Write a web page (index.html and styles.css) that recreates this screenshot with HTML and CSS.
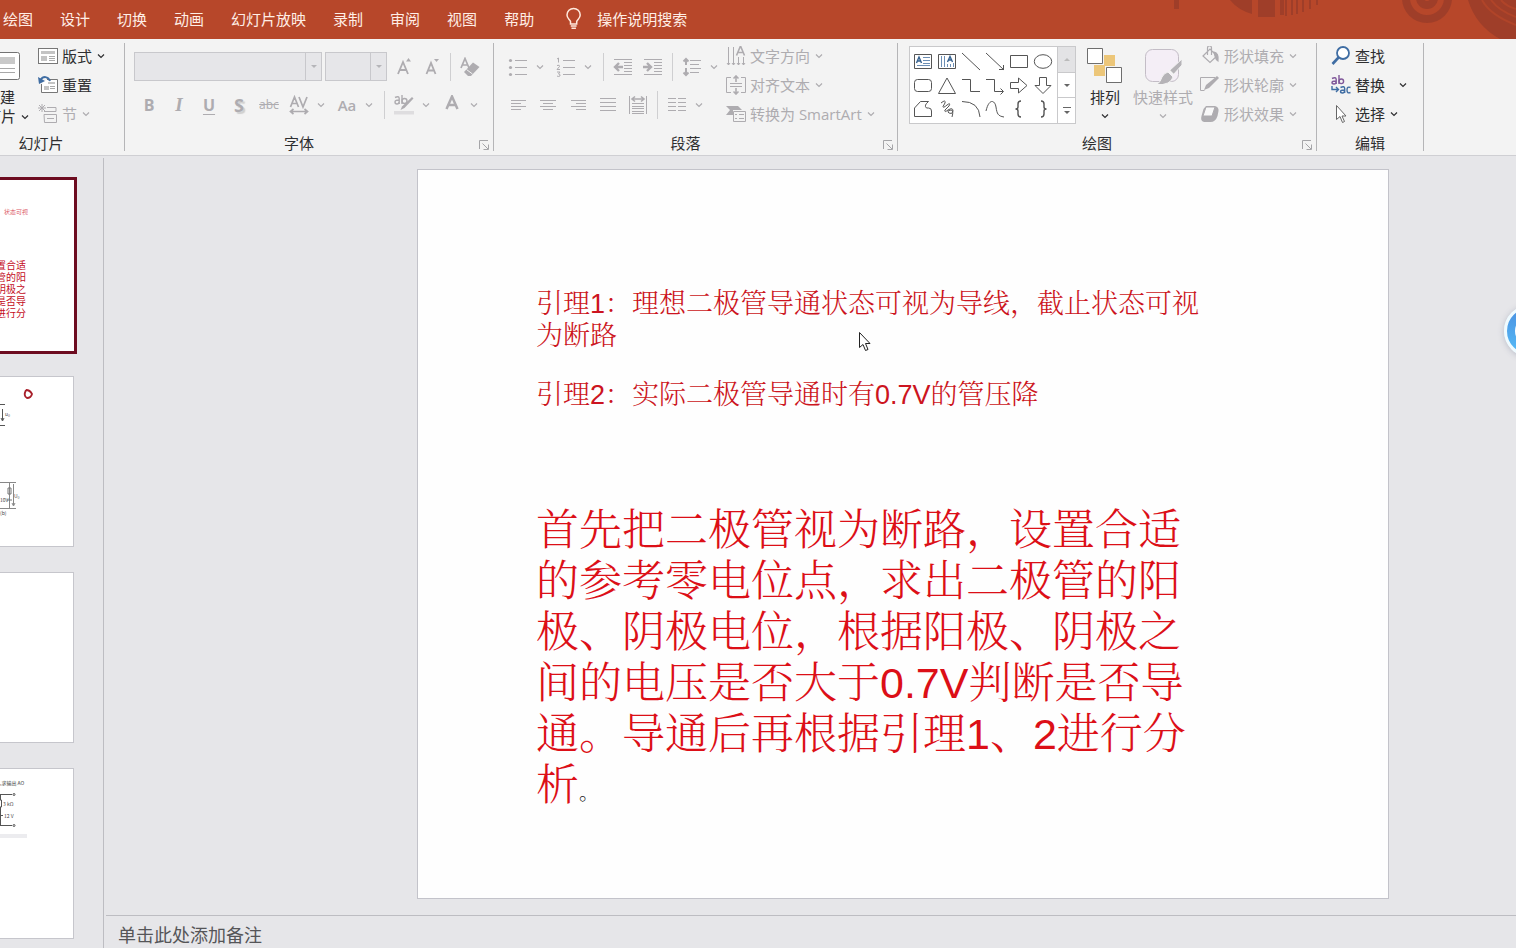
FILE: index.html
```html
<!DOCTYPE html>
<html lang="zh-CN">
<head>
<meta charset="utf-8">
<title>演示文稿</title>
<link rel="stylesheet" href="styles.css">
</head>
<body>
<svg class="sprite" aria-hidden="true">
  <symbol id="chev" viewBox="0 0 8 8"><path d="M1 2.500 4 5.500 7 2.500" fill="none" stroke="currentColor" stroke-width="1.200"/></symbol>
  <symbol id="launch" viewBox="0 0 12 12"><path d="M1.500 10V1.500H10M4.500 4.500 10 10M10.500 5.500V10.500H5.500" fill="none" stroke="currentColor"/></symbol>
</svg>
<div class="app">
<nav class="tabs">
  <svg class="tabs-art" viewBox="0 0 446 39" aria-hidden="true">
    <g fill="#9f3e29"><path d="M104 0h5v9h-5zM160 0h22v14q-14-4-22-14zM188 0h17v17h-17zM210 0h4v15h-4zM215 0h2v16h-2zM221 0h2v15h-2zM226 0h2v14h-2zM232 0h2v12h-2zM239 0h2v9h-2zM246 0h2v5h-2z"/>
    <path d="M398 0q8 26 32 39h16V0z"/></g>
    <g fill="none" stroke="#9f3e29"><circle cx="357" cy="-2" r="21" stroke-width="8"/><circle cx="357" cy="-2" r="7" stroke-width="8"/></g>
    <path d="M412 0q8 15 34 25M421 0q8 11 25 17M431 0q5 6 15 9" fill="none" stroke="#b04429" stroke-width="2"/>
  </svg>
  <button type="button">绘图</button><button type="button">设计</button><button type="button">切换</button><button type="button">动画</button><button type="button">幻灯片放映</button><button type="button">录制</button><button type="button">审阅</button><button type="button">视图</button><button type="button">帮助</button>
  <button type="button" class="tell"><svg width="24" height="24" viewBox="0 0 24 24" fill="none" stroke="#ffe9dc" stroke-width="1.500"><path d="M9.500 17v-2.500C9 12.500 6 11.500 6 8a6.600 6.600 0 0 1 13.200 0c0 3.500-3 4.500-3.500 6.500V17zM9.800 19h5.800M10.500 21.200h4.400"/></svg>操作说明搜索</button>
</nav>

<div class="ribbon">
  <section class="group group-slides">
    <div class="body">
      <button type="button" class="big new"><svg width="40" height="36" viewBox="0 0 40 36"><rect x=".5" y="4.500" width="39" height="27" rx="2" fill="#fff" stroke="#737373"/><path d="M5 9h30v7H5z" fill="#c9c9c9"/><path d="M5 20.500h30M5 24.500h30" stroke="#a8a8a8"/></svg><span>新建</span><span>幻灯片<svg class="chev"><use href="#chev"/></svg></span></button>
      <div class="rows">
        <button type="button" class="cmd"><svg class="ic" viewBox="0 0 20 20"><rect x=".5" y="2.500" width="19" height="15" fill="#fff" stroke="#777"/><path d="M3 5h14v3H3zM3 10h6v5H3z" fill="#c4c4c4"/><path d="M11 10.500h6M11 12.500h6M11 14.500h6" stroke="#aaa"/></svg>版式<svg class="chev"><use href="#chev"/></svg></button>
        <button type="button" class="cmd"><svg class="ic" viewBox="0 0 20 20"><path d="M9 4.500h10.500v13H3.500V9" fill="#fff" stroke="#777"/><path d="M10 7h7v2h-7zM6 11h5v4H6z" fill="#c4c4c4"/><path d="M12 11.500h5M12 13.500h5" stroke="#aaa"/><path d="M12 6C10 1 5 1 2.500 5" fill="none" stroke="#3f6da3" stroke-width="2"/><path d="M0 2l1 7 6-3z" fill="#3f6da3"/></svg>重置</button>
        <button type="button" class="cmd" disabled><svg class="ic" viewBox="0 0 20 20" fill="none" stroke="currentColor"><path d="M1 1l6 6M7 1 1 7M4 0v8M0 4h8M9 3.500h9v4H6M6 10.500h12.500v8h-12zM9 14.500h7"/></svg>节<svg class="chev"><use href="#chev"/></svg></button>
      </div>
    </div>
    <div class="foot"><h2>幻灯片</h2></div>
  </section>

  <section class="group group-font">
    <div class="body"><div class="lines">
      <div class="line tall">
        <span class="combo name"><select aria-label="字体" disabled></select><i></i></span><span class="combo size"><select aria-label="字号" disabled></select><i></i></span>
        <button type="button" class="tool narrow" disabled aria-label="增大字号"><svg class="ic" viewBox="0 0 20 20"><path d="M4 17 9 5l5 12M5.800 13h6.400" fill="none" stroke="currentColor" stroke-width="1.800"/><path d="M12 4.500 14.500 1 17 4.500z" fill="currentColor"/></svg></button>
        <button type="button" class="tool narrow" disabled aria-label="减小字号"><svg class="ic" viewBox="0 0 20 20"><path d="M4.500 17 9 6l4.500 11M6 13.500h6" fill="none" stroke="currentColor" stroke-width="1.800"/><path d="M12 2h5l-2.500 3z" fill="currentColor"/></svg></button>
        <span class="sep"></span>
        <button type="button" class="tool" disabled aria-label="清除格式"><svg class="ic" viewBox="0 0 20 20"><path d="M1 11 5 1.500 9 11M2.500 8h5" fill="none" stroke="currentColor" stroke-width="1.700"/><path d="M13 5.500 19.500 10 11 19H8L4 15z" fill="currentColor"/><path d="M6.500 12.500l6 4.500" stroke="#f3f3f3"/></svg></button>
      </div>
      <div class="line">
        <button type="button" class="tool b" disabled>B</button><button type="button" class="tool i" disabled>I</button><button type="button" class="tool u" disabled>U</button><button type="button" class="tool s" disabled>S</button><button type="button" class="tool abc" disabled>abc</button>
        <button type="button" class="split" disabled aria-label="字符间距"><svg class="ic" viewBox="0 0 20 20" fill="none" stroke="currentColor" stroke-width="1.700"><path d="M1.500 12 5.500 2l4 10M3 8.500h5M10 2l4 10 4-10M1.500 16.500h17M4.500 14l-3 2.500 3 2.500M15.500 14l3 2.500-3 2.500"/></svg><svg class="chev"><use href="#chev"/></svg></button>
        <button type="button" class="split" disabled><span class="face">Aa</span><svg class="chev"><use href="#chev"/></svg></button>
        <span class="sep"></span>
        <button type="button" class="split" disabled aria-label="突出显示"><svg class="ic" viewBox="0 0 20 20"><g fill="none" stroke="currentColor" stroke-width="1.400"><path d="M1 2.500q4-2 4.200 1V9M5 5Q1 5 1 7t2 2 2-2M8 0v9"/><circle cx="10.500" cy="6" r="2.500"/></g><path d="M18 2l1.500 1.500-9 9.500-4 2L8 11.500z" fill="currentColor"/><path d="M0 16h20v3.500H0z" fill="#dedddf"/></svg><svg class="chev"><use href="#chev"/></svg></button>
        <button type="button" class="split" disabled aria-label="字体颜色"><svg class="ic" viewBox="0 0 20 20"><path d="M4.500 14 10 1.500 15.500 14M6.500 10h7" fill="none" stroke="currentColor" stroke-width="2.500"/></svg><svg class="chev"><use href="#chev"/></svg></button>
      </div>
    </div></div>
    <div class="foot"><h2>字体</h2><button type="button" class="launch" aria-label="字体设置"><svg><use href="#launch"/></svg></button></div>
  </section>

  <section class="group group-para">
    <div class="body"><div class="lines">
      <div class="line tall">
        <button type="button" class="split" disabled aria-label="项目符号"><svg class="ic" viewBox="0 0 20 20"><path d="M7 3.500h12M7 10.500h12M7 17.500h12" stroke="currentColor"/><g fill="currentColor"><circle cx="2.500" cy="3.500" r="1.600"/><circle cx="2.500" cy="10.500" r="1.600"/><circle cx="2.500" cy="17.500" r="1.600"/></g></svg><svg class="chev"><use href="#chev"/></svg></button>
        <button type="button" class="split" disabled aria-label="编号"><svg class="ic" viewBox="0 0 20 20" fill="none" stroke="currentColor"><path d="M7 3.500h12M7 10.500h12M7 17.500h12M1 2l1.500-1v4.500M1 8.500q3-1 2.500 1L1 12.500h3M1 15h3l-1.500 2q2 0 1.500 2-2 1-3 0"/></svg><svg class="chev"><use href="#chev"/></svg></button>
        <span class="sep"></span>
        <button type="button" class="tool" disabled aria-label="减少缩进"><svg class="ic" viewBox="0 0 20 20" fill="none" stroke="currentColor"><path d="M1 2.500h18M11 5.500h8M11 8.500h8M11 11.500h8M11 14.500h8M1 17.500h18"/><path d="M10 10H2M6 6l-4 4 4 4" stroke-width="2.400"/></svg></button><button type="button" class="tool" disabled aria-label="增加缩进"><svg class="ic" viewBox="0 0 20 20" fill="none" stroke="currentColor"><path d="M1 2.500h18M11 5.500h8M11 8.500h8M11 11.500h8M11 14.500h8M1 17.500h18"/><path d="M0 10h8M4 6l4 4-4 4" stroke-width="2.400"/></svg></button>
        <span class="sep"></span>
        <button type="button" class="split" disabled aria-label="行距"><svg class="ic" viewBox="0 0 20 20" fill="none" stroke="currentColor"><path d="M8 3.500h11M8 7.500h9M8 11.500h11M8 15.500h9"/><path d="M4 2v6M4 11v7M1.500 4.500 4 2l2.500 2.500M1.500 15.500 4 18l2.500-2.500" stroke-width="2"/></svg><svg class="chev"><use href="#chev"/></svg></button>
      </div>
      <div class="line">
        <button type="button" class="tool" disabled aria-label="左对齐"><svg class="ic" viewBox="0 0 20 20" stroke="currentColor"><path d="M3 5.500h15M3 8.500h10M3 11.500h15M3 14.500h10"/></svg></button><button type="button" class="tool" disabled aria-label="居中"><svg class="ic" viewBox="0 0 20 20" stroke="currentColor"><path d="M2 5.500h16M5 8.500h10M2 11.500h16M5 14.500h10"/></svg></button><button type="button" class="tool" disabled aria-label="右对齐"><svg class="ic" viewBox="0 0 20 20" stroke="currentColor"><path d="M3 5.500h15M8 8.500h10M3 11.500h15M8 14.500h10"/></svg></button><button type="button" class="tool" disabled aria-label="两端对齐"><svg class="ic" viewBox="0 0 20 20" stroke="currentColor"><path d="M2 3.500h16M2 7.500h16M2 11.500h16M2 15.500h16"/></svg></button><button type="button" class="tool" disabled aria-label="分散对齐"><svg class="ic" viewBox="0 0 20 20" fill="none" stroke="currentColor"><path d="M1.500 1v18M18.500 1v18M4 8.500h12M4 11.500h12M4 13.500h12M4 16.500h12M4 18.500h12"/><path d="M4 4h12M7 1.500 4 4l3 2.500M13 1.500 16 4l-3 2.500" stroke-width="1.600"/></svg></button>
        <span class="sep"></span>
        <button type="button" class="split" disabled aria-label="分栏"><svg class="ic" viewBox="0 0 20 20" stroke="currentColor"><path d="M1 3.500h8M1 7.500h8M1 11.500h8M1 15.500h8M11 3.500h8M11 7.500h8M11 11.500h8M11 15.500h8"/></svg><svg class="chev"><use href="#chev"/></svg></button>
      </div>
    </div>
    <div class="rows">
      <button type="button" class="cmd" disabled><svg class="ic" viewBox="0 0 20 20" fill="none" stroke="currentColor"><path d="M2.500 1v18M7.500 1v18M12.500 11v8M17.500 11v8M1 17l1.500 2L4 17M6 17l1.500 2L9 17M11 17l1.500 2 1.500-2M16 17l1.500 2 1.500-2"/><path d="M10.500 9.500 14.500 0l4 9.500M12 6.500h5" stroke-width="1.600"/></svg>文字方向<svg class="chev"><use href="#chev"/></svg></button>
      <button type="button" class="cmd" disabled><svg class="ic" viewBox="0 0 20 20" fill="none" stroke="currentColor"><path d="M5 2.500H.5v15H5M15 2.500h4.500v15H15M4 8.500h12M4 11.500h12"/><path d="M10 7V1M10 13v6M7.500 3.500 10 1l2.500 2.500M7.500 16.500 10 19l2.500-2.500" stroke-width="1.600"/></svg>对齐文本<svg class="chev"><use href="#chev"/></svg></button>
      <button type="button" class="cmd" disabled><svg class="ic" viewBox="0 0 20 20"><path d="M0 2h12l4 4h-9v5H0l4-5z" fill="currentColor"/><path d="M7.500 7.500h12v10h-12z" fill="#f3f3f3" stroke="currentColor"/><path d="M9 10.500h2M13 10.500h5M9 14.500h2M13 14.500h5" stroke="currentColor"/></svg>转换为 SmartArt<svg class="chev"><use href="#chev"/></svg></button>
    </div></div>
    <div class="foot"><h2>段落</h2><button type="button" class="launch" aria-label="段落设置"><svg><use href="#launch"/></svg></button></div>
  </section>

  <section class="group group-draw">
    <div class="body">
      <div class="gallery">
        <div class="shapes">
          <button type="button" aria-label="文本框"><svg class="ic" viewBox="0 0 20 20"><path d="M1.500 3.500h17v14h-17z"/><path d="M3.500 12 6 6l2.500 6M4.500 10h3" stroke="#35618f" stroke-width="1.400"/><path d="M10 6.500h7M10 9.500h7M10 12.500h7M4 14.500h13" stroke="#6d8fb5"/></svg></button>
          <button type="button" aria-label="竖排文本框"><svg class="ic" viewBox="0 0 20 20"><path d="M1.500 3.500h17v14h-17z"/><path d="M10.500 11 13 5.500l2.500 5.500M11.500 9h3" stroke="#35618f" stroke-width="1.400"/><path d="M4.500 5v11M7.500 5v11M10.500 13v3M13.500 13v3M16.500 12v4" stroke="#6d8fb5"/></svg></button>
          <button type="button" aria-label="直线"><svg class="ic" viewBox="0 0 20 20"><path d="M1 2l18 17"/></svg></button>
          <button type="button" aria-label="箭头"><svg class="ic" viewBox="0 0 20 20"><path d="M1 2l18 17M18.500 14v4.500H14"/></svg></button>
          <button type="button" aria-label="矩形"><svg class="ic" viewBox="0 0 20 20"><path d="M1.500 4.500h17v12h-17z"/></svg></button>
          <button type="button" aria-label="椭圆"><svg class="ic" viewBox="0 0 20 20"><ellipse cx="10" cy="10.500" rx="8.700" ry="6.800"/></svg></button>
          <button type="button" aria-label="圆角矩形"><svg class="ic" viewBox="0 0 20 20"><rect x="1.500" y="4.500" width="17" height="12" rx="3"/></svg></button>
          <button type="button" aria-label="三角形"><svg class="ic" viewBox="0 0 20 20"><path d="M10 3 18.500 18.500h-17z"/></svg></button>
          <button type="button" aria-label="肘形连接"><svg class="ic" viewBox="0 0 20 20"><path d="M1 4.500h8.500v12H19"/></svg></button>
          <button type="button" aria-label="肘形箭头"><svg class="ic" viewBox="0 0 20 20"><path d="M1 4.500h8.500v12H18M15.500 13.500l3 3-3 3"/></svg></button>
          <button type="button" aria-label="右箭头"><svg class="ic" viewBox="0 0 20 20"><path d="M1.500 7.500h8V3l8.500 7.500L9.500 18v-4.500h-8z"/></svg></button>
          <button type="button" aria-label="下箭头"><svg class="ic" viewBox="0 0 20 20"><path d="M6.500 2.500v8H2L10 18.500l8-8h-4.500v-8z"/></svg></button>
          <button type="button" aria-label="任意多边形"><svg class="ic" viewBox="0 0 20 20"><path d="M1.500 17.500V9l6-6.500h8q-5 4-2 6.500h2q3 0 3 3v5.500z"/></svg></button>
          <button type="button" aria-label="自由曲线"><svg class="ic" viewBox="0 0 20 20"><path d="M4 4q5-4 4 0L6 7.500q0 2 4-1.500 4-3 2 1l-4 4q-1 3 3 0 5-3 5 1-1 4-4 2t2-3q3 0 1 7"/></svg></button>
          <button type="button" aria-label="弧形"><svg class="ic" viewBox="0 0 20 20"><path d="M1 2.500q17 0 18 15.500"/></svg></button>
          <button type="button" aria-label="曲线"><svg class="ic" viewBox="0 0 20 20"><path d="M1 12C4-1 10 1 11 8s2 9 8 10"/></svg></button>
          <button type="button" aria-label="左大括号"><svg class="ic" viewBox="0 0 20 20"><path d="M12 2q-3 0-3 3v3q0 2-2.500 2Q9 10 9 12v3q0 3 3 3" stroke-width="1.400"/></svg></button>
          <button type="button" aria-label="右大括号"><svg class="ic" viewBox="0 0 20 20"><path d="M8 2q3 0 3 3v3q0 2 2.500 2Q11 10 11 12v3q0 3-3 3" stroke-width="1.400"/></svg></button>
        </div>
        <div class="scroll">
          <button type="button" disabled aria-label="上一行"><svg width="8" height="8" viewBox="0 0 8 8"><path d="M1 6l3-3 3 3z" fill="#bbb"/></svg></button>
          <button type="button" aria-label="下一行"><svg width="8" height="8" viewBox="0 0 8 8"><path d="M1 3h6L4 6z" fill="#666"/></svg></button>
          <button type="button" aria-label="其他"><svg width="8" height="8" viewBox="0 0 8 8"><path d="M0 .5h8" stroke="#666"/><path d="M1 4h6L4 7z" fill="#666"/></svg></button>
        </div>
      </div>
      <button type="button" class="big arrange"><svg width="36" height="36" viewBox="0 0 36 36"><path d="M17 7h11v11H17zM7 17h11v11H7z" fill="#ecc679"/><path d="M.5.500h15v15H.5zM19.500 19.500h15v15h-15z" fill="#fff" stroke="#6e6e6e"/></svg><span>排列</span><svg class="chev"><use href="#chev"/></svg></button>
      <button type="button" class="big quick" disabled><svg width="40" height="36" viewBox="0 0 40 36"><rect x="2.500" y="1.500" width="33" height="32" rx="7" fill="#f4eef6" stroke="#c3bdc6"/><path d="M39 11v6l-9 10-4-4zM25 24l5 5q-2 8-17 8 5-3 6-8 2-4 6-5z" fill="#b5b3b7" stroke="#f3f3f3" stroke-width="1"/><path d="M26 22l5 5" stroke="#f3f3f3" stroke-width="1.500"/></svg><span>快速样式</span><svg class="chev"><use href="#chev"/></svg></button>
      <div class="rows">
        <button type="button" class="cmd" disabled><svg class="ic" viewBox="0 0 20 20" fill="none" stroke="currentColor" stroke-width="1.200"><path d="M3 10 10 3l7 7-7 6.500zM7.500 9V2q0-2 2-2t2 2v7"/><path d="M14 6q5 1 4 9-2-1-3-5z" fill="currentColor"/></svg>形状填充<svg class="chev"><use href="#chev"/></svg></button>
        <button type="button" class="cmd" disabled><svg class="ic" viewBox="0 0 20 20"><path d="M15 2.500H.5v13h4" fill="none" stroke="currentColor"/><path d="M17 1l2 2L9 13l-5 2 2-5z" fill="currentColor"/></svg>形状轮廓<svg class="chev"><use href="#chev"/></svg></button>
        <button type="button" class="cmd" disabled><svg class="ic" viewBox="0 0 20 20"><path d="M6 2h9q4 1 3.500 5l-1 5q-2 6-7 6H4q-4-1-2.500-6l2-7z" fill="currentColor"/><path d="M6 3h9l-3 9H3z" fill="#f8f8f8" stroke="currentColor"/></svg>形状效果<svg class="chev"><use href="#chev"/></svg></button>
      </div>
    </div>
    <div class="foot"><h2>绘图</h2><button type="button" class="launch" aria-label="形状设置"><svg><use href="#launch"/></svg></button></div>
  </section>

  <section class="group group-edit">
    <div class="body"><div class="rows">
      <button type="button" class="cmd"><svg class="ic" viewBox="0 0 20 20" fill="none" stroke="#3f6da3"><circle cx="12" cy="7" r="6" fill="#fff" stroke-width="1.800"/><path d="M7.500 11.500 1.500 18" stroke-width="2.600"/></svg>查找</button>
      <button type="button" class="cmd far"><svg class="ic" viewBox="0 0 20 20" fill="none" stroke-width="1.400"><g stroke="#80589a"><path d="M1 3.500q4-2 4.200 1V9M5 6Q1 6 1 7.500T3 9t2-2M8 0v9"/><circle cx="10.300" cy="6.300" r="2.300"/></g><g stroke="#3f6da3"><path d="M1 11v3.500h6M5 12l2.500 2.500L5 17M9.500 12.500q4-2 4.200 1V18M13.500 15q-4 0-4 1.500t2 1.500 2-2M19.500 12.500q-3.500-1.500-3.500 2.500t3.500 2.500"/></g></svg>替换<svg class="chev"><use href="#chev"/></svg></button>
      <button type="button" class="cmd"><svg class="ic" viewBox="0 0 20 20"><path d="M5.500 1.500v14l3.500-3 2.500 6 2-1-2.500-5.500H15z" fill="#fff" stroke="#666"/></svg>选择<svg class="chev"><use href="#chev"/></svg></button>
    </div></div>
    <div class="foot"><h2>编辑</h2></div>
  </section>
</div>

<main class="work">
  <aside class="thumbs">
    <svg class="thumb current" viewBox="0 0 74 171"><text class="t-small" x="28" y="34" text-anchor="end">状态可视</text><g class="t-big"><text x="26" y="89">置合适</text><text x="26" y="101">管的阳</text><text x="26" y="113">阴极之</text><text x="26" y="125">是否导</text><text x="26" y="137">进行分</text></g></svg>
    <svg class="thumb" viewBox="0 0 74 171" fill="none" stroke="#555"><path d="M0 28.500h5M0 49.500h5M2.500 33v11M1 42l1.500 3L4 42"/><path d="M0 106.500h16M0 132.500h16M9.500 106v26M13.500 108v21M12 127l1.500 3 1.500-3" stroke="#888"/><path d="M8 112h3v6H8zM7 124h5" stroke="#777"/><path d="M26 14q4 0 6 4-1 4-5 4-4-2-1-8" stroke="#a81f2a" stroke-width="1.800"/><g class="t-tiny"><text x="5" y="40">u₀</text><text x="14" y="122">U₀</text><text x="0" y="126">10V</text><text x="0" y="139">(b)</text></g></svg>
    <svg class="thumb" viewBox="0 0 74 171"></svg>
    <svg class="thumb" viewBox="0 0 74 171" fill="none" stroke="#555"><path d="M0 66h27v4H0z" fill="#ececef" stroke="none"/><path d="M0 26.500h12M0 57.500h12M.5 26v6M.5 39v18M0 32h1.500v7H0M0 47.500h3"/><circle cx="14" cy="26.500" r="1"/><circle cx="14" cy="57.500" r="1"/><g class="t-tiny"><text x="0" y="17">,求输出 AO</text><text x="3" y="38">3 kΩ</text><text x="4" y="50">12 V</text></g></svg>
  </aside>
  <div class="editor">
    <div class="stage">
      <article class="slide">
        <div class="lemmas"><p>引理1：理想二极管导通状态可视为导线，截止状态可视<br>为断路</p><p>引理2：实际二极管导通时有0.7V的管压降</p></div>
        <p class="method">首先把二极管视为断路，设置合适<br>的参考零电位点，求出二极管的阳<br>极、阴极电位，根据阳极、阴极之<br>间的电压是否大于0.7V判断是否导<br>通。导通后再根据引理1、2进行分<br>析<span class="stop">。</span></p>
        <svg class="pointer" viewBox="0 0 14 21" width="14" height="21"><path d="M1.500 1.500v15l3.500-3 2.500 6 2.500-1-2.500-6H12z" fill="#fff" stroke="#222"/></svg>
      </article>
      <button type="button" class="bubble" aria-label="浮动助手"><svg viewBox="0 0 52 52" width="52" height="52"><defs><linearGradient id="sky" x2="0" y2="1"><stop stop-color="#4a8fe0"/><stop offset="1" stop-color="#55bdf8"/></linearGradient></defs><circle cx="26" cy="26" r="24.500" fill="url(#sky)" stroke="#effbff" stroke-width="3"/><circle cx="26" cy="26" r="12" fill="none" stroke="#fff" stroke-width="6"/></svg></button>
    </div>
    <div class="notes">单击此处添加备注</div>
  </div>
</main>
</div>
</body>
</html>
```
FILE: styles.css
```css
* { box-sizing: border-box; }
body {
  margin: 0;
  color: #2e2e30;
  background: #e6e6e9;
  font: 15px/22px "Open Sans", "Noto Sans CJK SC", sans-serif;
}
button {
  padding: 0;
  border: 0;
  background: none;
  color: inherit;
  font: inherit;
  white-space: nowrap;
}
button:disabled { color: #aeacb0; }
h2, p { margin: 0; font-weight: 400; }
svg { display: block; flex: none; }
.sprite { position: absolute; width: 0; height: 0; }
.app { display: flex; flex-direction: column; height: 100vh; overflow: hidden; }

/* Tab strip */
.tabs {
  position: relative;
  display: flex;
  flex: none;
  align-items: center;
  gap: 27px;
  height: 39px;
  padding-left: 3px;
  background: #b7472a;
  color: #ffeee6;
}
.tabs-art { position: absolute; top: 0; right: 0; width: 446px; height: 39px; }
.tabs button { line-height: 20px; padding-bottom: 2px; }
.tell { display: flex; align-items: center; gap: 12px; }

/* Ribbon */
.ribbon {
  display: flex;
  flex: none;
  padding: 4px 0;
  border-bottom: 1px solid #cfcfd3;
  background: #f3f3f3;
}
.group {
  display: flex;
  flex: none;
  flex-direction: column;
  border-right: 1px solid #b5b5b7;
}
.group-slides { width: 167px; margin-left: -42px; }
.group-font { width: 369px; }
.group-para { width: 404px; }
.group-draw { width: 419px; }
.group-edit { width: 107px; }
.body { display: flex; height: 85px; padding-left: 9px; }
.group-slides .body { padding-left: 13px; }
.group-draw .body { padding-left: 11px; }
.group-edit .body { padding-left: 14px; }
.rows { display: flex; flex-direction: column; gap: 2px; margin-top: -1px; }
.cmd { display: flex; align-items: center; height: 27px; }
.ic { width: 20px; height: 20px; }
.cmd .ic { margin-right: 4px; }
.chev { width: 8px; height: 8px; }
.cmd .chev { margin-left: 5px; }
.cmd.far { width: 76px; }
.cmd.far .chev { margin-left: auto; }
.foot { display: flex; align-items: flex-end; padding-top: 7px; line-height: 16px; }
.foot h2 { flex: 1; font-size: 15px; text-align: center; }
.launch { margin: 0 3px 0 5px; color: #a5a5a8; }
.launch svg { width: 12px; height: 12px; }

.big {
  display: flex;
  flex-direction: column;
  align-items: center;
  padding-top: 5px;
}
.big > span { margin-top: 2px; }
.big > .chev { margin-top: 4px; }
.new { width: 58px; margin-right: 9px; line-height: 19px; }
.new > span { display: flex; align-items: center; gap: 5px; margin-top: 0; }
.new > svg + span { margin-top: 4px; }

.lines { display: flex; flex-direction: column; gap: 12px; padding-top: 9px; }
.line { display: flex; align-items: center; height: 24px; }
.line.tall { height: 29px; }
.tool { display: flex; align-items: center; justify-content: center; width: 30px; height: 24px; }
.tool.narrow { width: 28px; }
.split { display: flex; align-items: center; width: 48px; height: 24px; padding-left: 5px; }
.split .chev { margin-left: 8px; }
.face { width: 20px; text-align: center; font-weight: 600; }
.sep { width: 1px; height: 28px; margin: 0 4px; background: #cfcfd1; }
.b, .i, .u, .s { font-size: 16px; font-weight: 700; }
.i { font-family: "Liberation Serif", serif; font-style: italic; font-size: 19px; }
.u { text-decoration: underline; text-underline-offset: 3px; }
.s { font-size: 18px; text-shadow: 2px 2px 1px #cfcfcf; }
.abc { font-size: 12px; text-decoration: line-through; }

.combo {
  display: flex;
  height: 29px;
  margin-right: 3px;
  border: 1px solid #c8c8cc;
  background: #e6e6e9;
}
.combo.name { width: 188px; }
.combo.size { width: 62px; }
.combo select { flex: 1; min-width: 0; border: 0; background: none; appearance: none; }
.combo i {
  display: grid;
  place-items: center;
  width: 16px;
  border-left: 1px solid #c8c8cc;
}
.combo i::before {
  content: "";
  border: 3px solid transparent;
  border-top-color: #b5b5b9;
  border-bottom: 0;
}
.group-para .lines { width: 223px; }

.gallery {
  display: flex;
  width: 167px;
  height: 78px;
  margin: 3px 11px 0 0;
  border: 1px solid #c9c9cb;
  background: #fff;
}
.shapes { display: grid; flex: 1; grid-template-columns: repeat(6, 24px); grid-template-rows: repeat(3, 24px); padding-top: 2px; padding-left: 1px; }
.shapes button { display: grid; place-items: center; }
.shapes .ic { fill: none; stroke: #555; }
.scroll { display: grid; width: 18px; border-left: 1px solid #c9c9cb; }
.scroll button { display: grid; place-items: center; }
.scroll button + button { border-top: 1px solid #c9c9cb; }
.scroll button:disabled { background: #e3e3e5; }
.arrange { width: 36px; margin-right: 10px; }
.quick { width: 60px; margin-right: 7px; }

/* Workspace */
.work { display: flex; flex: 1; min-height: 0; }
.thumbs {
  display: flex;
  flex: none;
  flex-direction: column;
  gap: 25px;
  width: 104px;
  margin-top: 2px;
  padding-top: 22px;
  border-right: 1px solid #bdbdc2;
  overflow: hidden;
}
.thumb { width: 74px; height: 171px; background: #fff; box-shadow: inset -1px 0 #c6c6cc, inset 0 1px #c6c6cc, inset 0 -1px #c6c6cc; }
.thumb.current { outline: 3px solid #6d0c20; box-shadow: none; }
.thumb text { font-family: "Noto Sans CJK SC", sans-serif; stroke: none; }
.t-small { font-size: 6px; fill: #dc5a68; }
.t-big { font-size: 10px; fill: #c40d1c; text-anchor: end; }
.t-tiny { font-size: 5px; fill: #444; }
.editor { display: flex; flex: 1; flex-direction: column; min-width: 0; }
.stage { position: relative; flex: 1; padding: 13px 127px 0 313px; overflow: hidden; }
.slide {
  position: relative;
  aspect-ratio: 972 / 730;
  padding: 118px 0 0 118px;
  border: 1px solid #c3c3ca;
  background: #fefefe;
  font-family: "Liberation Sans", "Noto Serif CJK SC", "Noto Sans CJK SC Light", "Noto Sans CJK SC", sans-serif;
  font-weight: 300;
  white-space: nowrap;
}
.slide p { font-weight: 300; }
.lemmas { display: grid; gap: 27px; color: #cc1420; font-size: 27px; line-height: 32px; }
.slide .method { margin-top: 94px; color: #dc0f17; font-size: 43px; line-height: 51px; }
.stop { color: #111; font-size: 20px; line-height: 20px; }
.pointer { position: absolute; top: 161px; left: 440px; }
.bubble { position: absolute; top: 149px; right: -40px; border-radius: 50%; box-shadow: 0 1px 6px #b9bcc8; }
.notes {
  flex: none;
  height: 33px;
  margin-left: 2px;
  padding-left: 12px;
  border-top: 1px solid #bdbdc2;
  color: #555558;
  font-size: 18px;
  line-height: 38px;
}
```
